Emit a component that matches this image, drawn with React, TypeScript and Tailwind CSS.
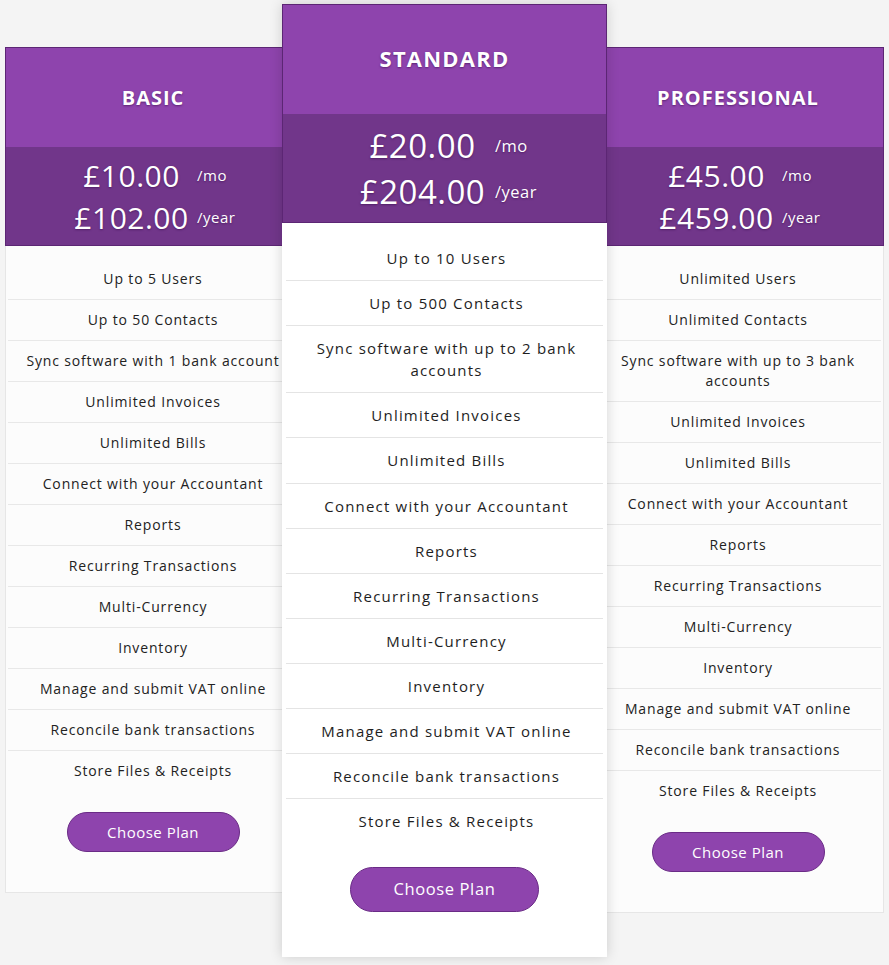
import React from "react";

type Plan = {
  name: string;
  month: string;
  year: string;
  features: string[];
};

const basic: Plan = {
  name: "BASIC",
  month: "£10.00",
  year: "£102.00",
  features: [
    "Up to 5 Users",
    "Up to 50 Contacts",
    "Sync software with 1 bank account",
    "Unlimited Invoices",
    "Unlimited Bills",
    "Connect with your Accountant",
    "Reports",
    "Recurring Transactions",
    "Multi-Currency",
    "Inventory",
    "Manage and submit VAT online",
    "Reconcile bank transactions",
    "Store Files & Receipts",
  ],
};

const standard: Plan = {
  name: "STANDARD",
  month: "£20.00",
  year: "£204.00",
  features: [
    "Up to 10 Users",
    "Up to 500 Contacts",
    "Sync software with up to 2 bank accounts",
    "Unlimited Invoices",
    "Unlimited Bills",
    "Connect with your Accountant",
    "Reports",
    "Recurring Transactions",
    "Multi-Currency",
    "Inventory",
    "Manage and submit VAT online",
    "Reconcile bank transactions",
    "Store Files & Receipts",
  ],
};

const professional: Plan = {
  name: "PROFESSIONAL",
  month: "£45.00",
  year: "£459.00",
  features: [
    "Unlimited Users",
    "Unlimited Contacts",
    "Sync software with up to 3 bank accounts",
    "Unlimited Invoices",
    "Unlimited Bills",
    "Connect with your Accountant",
    "Reports",
    "Recurring Transactions",
    "Multi-Currency",
    "Inventory",
    "Manage and submit VAT online",
    "Reconcile bank transactions",
    "Store Files & Receipts",
  ],
};

function SideCard({ plan, className }: { plan: Plan; className: string }) {
  return (
    <div className={"mt-[47px] flex flex-col " + className}>
      <div className="border border-[#5c2674] text-white [text-shadow:0_1px_2px_rgba(60,15,80,0.6)]">
        <div className="h-[99px] bg-[#8e44ad] flex items-center justify-center text-[20px] font-bold tracking-[1px]">
          {plan.name}
        </div>
        <div className="h-[98px] bg-[#71368a] py-[7px]">
          <div className="flex justify-center items-center h-[42px]">
            <span className="w-[131px] text-center text-[30px] tracking-[0.5px] whitespace-nowrap">{plan.month}</span>
            <span className="w-[43px] text-left text-[15px] tracking-[0.5px] whitespace-nowrap">/mo</span>
          </div>
          <div className="flex justify-center items-center h-[42px]">
            <span className="w-[131px] text-center text-[30px] tracking-[0.5px] whitespace-nowrap">{plan.year}</span>
            <span className="w-[43px] text-left text-[15px] tracking-[0.5px] whitespace-nowrap">/year</span>
          </div>
        </div>
      </div>
      <div className="bg-[#fcfcfc] border-x border-b border-[#e6e6e6] pt-[13px] pb-[40px] flex flex-col items-center">
        <ul className="w-full px-[2px]">
          {plan.features.map((f, i) => (
            <li
              key={f}
              className={
                "py-[10px] leading-[20px] text-[14px] tracking-[0.85px] text-[#222] text-center px-[6px] " +
                (i < plan.features.length - 1 ? "border-b border-[#e8e8e8]" : "")
              }
            >
              {f}
            </li>
          ))}
        </ul>
        <button className="mt-[21px] w-[173px] h-[40px] rounded-full bg-[#8e44ad] border border-[#6a2b86] text-white text-[15px] tracking-[0.5px]">
          Choose Plan
        </button>
      </div>
    </div>
  );
}

function FeaturedCard({ plan }: { plan: Plan }) {
  return (
    <div className="relative z-10 mt-[4px] ml-[-19px] w-[325px] shrink-0 flex flex-col shadow-[0_0_12px_rgba(0,0,0,0.16)]">
      <div className="border border-[#5c2674] text-white [text-shadow:0_1px_2px_rgba(60,15,80,0.6)]">
        <div className="h-[109px] bg-[#8e44ad] flex items-center justify-center text-[22px] font-bold tracking-[1.2px] pb-[2px]">
          {plan.name}
        </div>
        <div className="h-[108px] bg-[#71368a] pt-[9px] pb-[7px]">
          <div className="flex justify-center items-center h-[46px]">
            <span className="w-[145px] text-center text-[33px] tracking-[0.5px] whitespace-nowrap">{plan.month}</span>
            <span className="w-[44px] text-left text-[16.5px] tracking-[0.5px] whitespace-nowrap">/mo</span>
          </div>
          <div className="flex justify-center items-center h-[46px]">
            <span className="w-[145px] text-center text-[33px] tracking-[0.5px] whitespace-nowrap">{plan.year}</span>
            <span className="w-[44px] text-left text-[16.5px] tracking-[0.5px] whitespace-nowrap">/year</span>
          </div>
        </div>
      </div>
      <div className="bg-white pt-[13px] pb-[45px] flex flex-col items-center">
        <ul className="w-full px-[4px]">
          {plan.features.map((f, i) => (
            <li
              key={f}
              className={
                "py-[11px] leading-[22.1px] text-[15px] tracking-[1.2px] text-[#1e1e1e] text-center pl-[20px] pr-[16px] " +
                (i < plan.features.length - 1 ? "border-b border-[#e4e4e4]" : "")
              }
            >
              {f}
            </li>
          ))}
        </ul>
        <button className="mt-[24px] w-[189px] h-[45px] rounded-full bg-[#8e44ad] border border-[#6a2b86] text-white text-[16.5px] tracking-[0.6px]">
          Choose Plan
        </button>
      </div>
    </div>
  );
}

export default function App() {
  return (
    <div
      className="min-h-[965px] w-full bg-[#f4f4f4] px-[5px]"
      style={{ fontFamily: '"Open Sans", "Noto Sans", sans-serif' }}
    >
      <div className="flex items-start">
        <SideCard plan={basic} className="w-[296px] shrink-0" />
        <FeaturedCard plan={standard} />
        <SideCard plan={professional} className="w-[292px] shrink-0 ml-[-15px]" />
      </div>
    </div>
  );
}
